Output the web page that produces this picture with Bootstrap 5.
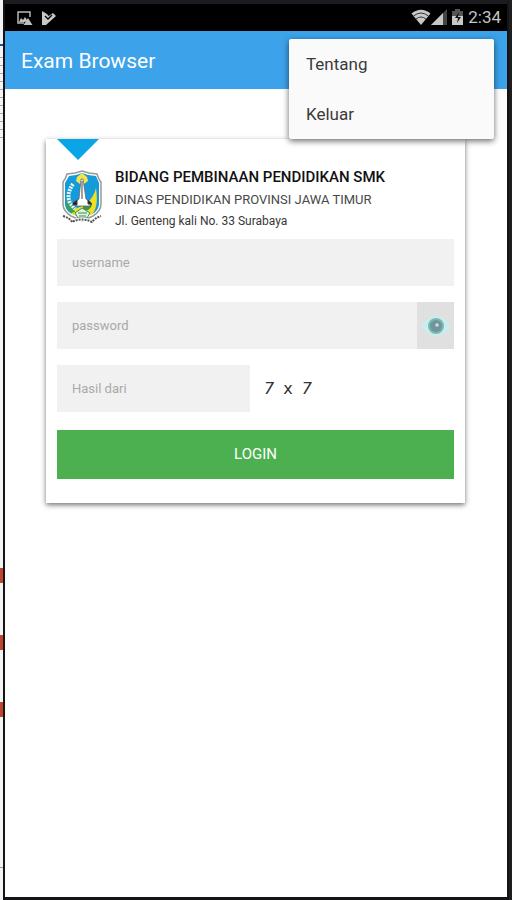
<!DOCTYPE html>
<html lang="id">
<head>
<meta charset="utf-8">
<meta name="viewport" content="width=device-width, initial-scale=1">
<title>Exam Browser</title>
<link href="https://cdn.jsdelivr.net/npm/bootstrap@5.3.0/dist/css/bootstrap.min.css" rel="stylesheet">
<style>
body { font-family: Roboto, "Liberation Sans", sans-serif; background: #1e1e20; }
.edge-strip { flex: 0 0 3px; background:
  linear-gradient(#c0452f, #c0452f) 0 568px / 3px 15px no-repeat,
  linear-gradient(#c0452f, #c0452f) 0 635px / 3px 15px no-repeat,
  linear-gradient(#c0452f, #c0452f) 0 702px / 3px 15px no-repeat,
  linear-gradient(#1e50a8, #1e50a8) 0 44px / 3px 2px no-repeat,
  linear-gradient(#999, #999) 0 867px / 3px 1px no-repeat,
  repeating-linear-gradient(transparent 0 7px, #aaa 7px 8px) 0 50px / 3px 88px no-repeat,
  #f4f4f4; }
.device { border: solid #141416; border-width: 4px 2px 3px 2px; border-top-color: #1b1b20; margin-right: 3px; min-width: 0; }
.status-bar { height: 27px; background: #000; color: #c4c4c4; padding: 0 6px 0 11px; }
.clock { font-size: 17px; line-height: 27px; }
.app-bar { height: 58px; background: #3ca2ea; padding: 2px 17px 0 16px; }
.app-title { font-size: 21px; line-height: 26px; }
.overflow-menu { top: 8px; right: 13px; width: 205px; background: #fafafa; border-radius: 2px; box-shadow: 0 2px 6px rgba(0,0,0,.6); z-index: 5; }
.overflow-menu a { font-size: 17px; line-height: 50px; color: #3a3a3a; padding: 0 17px; }
.login-panel { margin: 50px 42px 0 41px; padding: 0 11px 24px; background: #fff; box-shadow: 0 2px 5px rgba(0,0,0,.55); }
.notch { width: 42px; height: 21px; background: #0aa5e6; clip-path: polygon(0 0, 100% 0, 50% 100%); }
.agency { height: 79px; padding: 6px 0 0 4px; gap: 12px; }
.agency h1 { font-size: 15px; line-height: 23px; font-weight: 500; color: #111; }
.agency p { font-size: 13px; line-height: 21px; color: #484848; }
.agency address { font-size: 12px; line-height: 22px; color: #383838; }
.field { height: 47px; background: #f1f1f1; font-size: 13px; padding: 0 15px; color: #444; }
.field:focus { background: #f1f1f1; box-shadow: none; }
.field::placeholder { color: #a9a9a9; }
.form-stack { gap: 16px; }
.eye { width: 37px; background: #e0e0e0; }
.answer { flex: 0 0 193px; }
.sum { font: 16px "DejaVu Sans", sans-serif; color: #333; gap: 9px; padding-left: 14px; }
.login-btn { height: 49px; margin-top: 2px; background: #4caf50; color: #fff; font-size: 15px; }
.login-btn:hover { background: #43a047; color: #fff; }
</style>
</head>
<body>
<div class="d-flex min-vh-100">
  <div class="edge-strip"></div>
  <div class="device flex-grow-1 bg-white d-flex flex-column">
    <div class="status-bar d-flex align-items-center">
      <svg width="17" height="16" viewBox="0 0 17 16" aria-hidden="true"><path d="M14 7V2H2v11h6" fill="none" stroke="#b8b8b8" stroke-width="1.5"/><path d="M3 12l2-4 2 2 2-3 2 3-2 2zM12 8l4.500 7h-9z" fill="#c0c0c0"/></svg>
      <svg class="ms-2" width="16" height="16" viewBox="0 0 16 16" aria-hidden="true"><path d="M1 1l5 3 1.500 2L12 3l3 3-10 9-4 0z" fill="#c8c8c8"/><path d="M4 6l3 3 4-4" fill="none" stroke="#000" stroke-width="1.300"/></svg>
      <div class="ms-auto d-flex align-items-center">
        <svg width="20" height="17" viewBox="0 0 19 17" aria-hidden="true"><path d="M0 4.500Q9.500-3 19 4.500L9.500 16z" fill="#c8c8c8"/><path d="M2 7q7.500-6 15 0M4.500 10q5-4 10 0" fill="none" stroke="#333" stroke-width="1"/></svg>
        <svg width="16" height="17" viewBox="0 0 16 17" aria-hidden="true"><path d="M16 0v16H0z" fill="#454545"/><path d="M12 4v12H0z" fill="#c8c8c8"/></svg>
        <svg class="ms-1" width="13" height="17" viewBox="0 0 13 17" aria-hidden="true"><path d="M4 0h5v2h3v6H1V2h3z" fill="#555"/><path d="M1 7h11v9H1z" fill="#c8c8c8"/><path d="M8 3L4 9h3l-1 5 4-6H7z" fill="#111"/></svg>
        <span class="clock ms-1">2:34</span>
      </div>
    </div>
    <header class="app-bar d-flex align-items-center position-relative text-white">
      <span class="app-title">Exam Browser</span>
      <nav class="overflow-menu position-absolute" aria-label="Menu">
        <a class="d-block text-decoration-none" href="#tentang">Tentang</a>
        <a class="d-block text-decoration-none" href="#keluar">Keluar</a>
      </nav>
    </header>
    <main class="flex-grow-1">
      <section class="login-panel">
        <div class="notch"></div>
        <div class="agency d-flex">
          <svg class="flex-shrink-0 mt-1" width="42" height="56" viewBox="0 0 42 56" role="img" aria-label="Jawa Timur">
            <path d="M14 3l7-2 7 2 8 1q2 6 4 8v22q0 7-8 12l-11 5-11-5Q2 41 2 34V12q3-4 4-8z" fill="#fff" stroke="#999" stroke-width="1.500"/>
            <path d="M15 5l6-2 6 2 8 1 3 7v21q0 5-5 9l-12 5-12-5q-5-4-5-9V13l4-7z" fill="#159bdc"/>
            <path d="M16 7l5-4 5 4 1 4-4 3h-4l-4-3z" fill="#f3e54d"/>
            <path d="M35 18q3 21-5 27H13q-5-3-5-6 8 1 18-6 7-6 9-15z" fill="#f2df20"/>
            <path d="M5 30q7 4 9 12l-4 1q-5-4-5-9z" fill="#35a15d"/>
            <path d="M29 31q5 4-2 9l-5 2v-6z" fill="#3f9745"/>
            <path d="M12 14q-7 10-3 19l5 6" fill="none" stroke="#e9f5ed" stroke-width="4" stroke-dasharray="2 1"/>
            <path d="M20 9h2l3 20 4 3v4H14v-4l4-3z" fill="#fff" stroke="#667" stroke-width=".8"/>
            <path d="M21 11v18M12 33l4-3v5h-4zM27 30l4 4h-4z" fill="#222" stroke="#444"/>
            <path d="M14 43l7-5 8 5-3 5H17z" fill="#e4f1e1" stroke="#329353"/>
            <path d="M17 43h9M18 46h7" stroke="#329353"/>
            <path d="M2 47q7 1 9 5 10-5 20 0 3-4 9-5" fill="none" stroke="#fff" stroke-width="4"/>
            <path d="M2 46q7 2 9 6 10-5 20 0 3-4 9-6" fill="none" stroke="#555" stroke-width="2" stroke-dasharray="2 1"/>
          </svg>
          <div class="text-nowrap">
            <h1 class="m-0">BIDANG PEMBINAAN PENDIDIKAN SMK</h1>
            <p class="m-0">DINAS PENDIDIKAN PROVINSI JAWA TIMUR</p>
            <address class="m-0">Jl. Genteng kali No. 33 Surabaya</address>
          </div>
        </div>
        <form class="form-stack d-flex flex-column">
          <input class="field form-control border-0 rounded-0" type="text" placeholder="username" aria-label="username">
          <div class="d-flex">
            <input class="field form-control border-0 rounded-0" type="password" placeholder="password" aria-label="password">
            <button class="eye btn border-0 rounded-0 p-0 flex-shrink-0 d-flex align-items-center justify-content-center" type="button" aria-label="Tampilkan password">
              <svg width="30" height="20" viewBox="0 0 30 20" aria-hidden="true"><path d="M0 10Q15-9 30 10 15 29 0 10z" fill="#c9eeee"/><circle cx="15" cy="10" r="8" fill="#78b9b5"/><circle cx="15" cy="10" r="6" fill="#71959b"/><circle cx="16" cy="9" r="1.800" fill="#d0dede"/></svg>
            </button>
          </div>
          <div class="d-flex align-items-center">
            <div class="answer"><input class="field form-control border-0 rounded-0" type="text" placeholder="Hasil dari" aria-label="Hasil dari"></div>
            <div class="sum d-flex"><em>7</em><span>x</span><em>7</em></div>
          </div>
          <button class="login-btn btn border-0 rounded-0 w-100" type="submit">LOGIN</button>
        </form>
      </section>
    </main>
  </div>
</div>
</body>
</html>
